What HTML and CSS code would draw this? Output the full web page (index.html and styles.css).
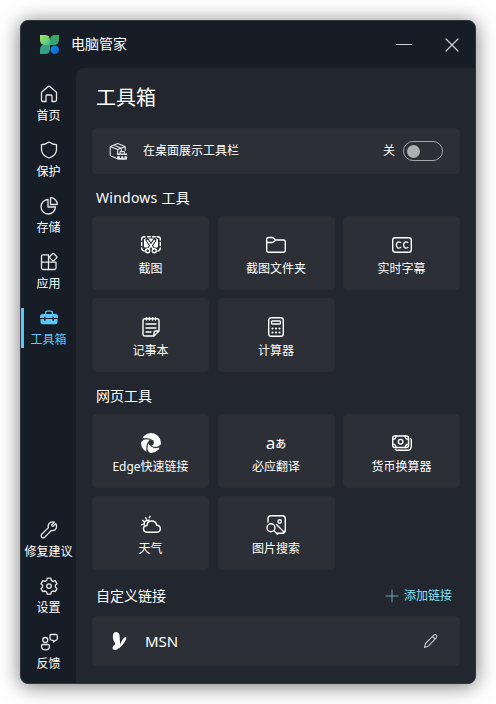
FILE: index.html
```html
<!DOCTYPE html>
<html lang="zh-CN">
<head>
<meta charset="utf-8">
<title>电脑管家</title>
<link rel="stylesheet" href="styles.css">
</head>
<body>
<div class="window">
  <header class="titlebar">
    <svg class="logo" viewBox="0 0 18 18">
      <defs>
        <linearGradient id="g1" x1="0" y1="0" x2="1" y2="1"><stop offset="0" stop-color="#a5e957"/><stop offset="1" stop-color="#43bd8b"/></linearGradient>
        <linearGradient id="g2" x1="1" y1="0" x2="0" y2="1"><stop offset="0" stop-color="#3aa660"/><stop offset="1" stop-color="#319f91"/></linearGradient>
        <linearGradient id="g3" x1="0" y1="0" x2="1" y2="1"><stop offset="0" stop-color="#168bed"/><stop offset="1" stop-color="#0864cf"/></linearGradient>
      </defs>
      <path fill="url(#g2)" d="M9.500 9.500V5Q9.500 0 14.500 0H18V4Q18 9.500 13 9.500zM0 18V14Q0 9 5 9H9.500V13Q9.500 18 5 18z"/>
      <path fill="url(#g1)" d="M0 0H4.500Q9.500 0 9.500 5V9.500H5Q0 9.500 0 5z"/>
      <circle cx="14" cy="14" r="4" fill="url(#g3)"/>
    </svg>
    <span class="app-name">电脑管家</span>
    <div class="controls">
      <svg viewBox="0 0 16 16"><path d="M.5 7.500h15"/></svg>
      <svg viewBox="0 0 16 16"><path d="M2 2l12 12M14 2L2 14"/></svg>
    </div>
  </header>
  <div class="body">
    <nav class="sidebar">
      <a class="nav-item"><svg viewBox="0 0 20 20"><path d="M2.500 8.300 9.200 2.500q.8-.6 1.600 0L17.500 8.300V16q0 1.500-1.500 1.500h-3V12q0-1-1-1H8q-1 0-1 1v5.500H4q-1.500 0-1.500-1.500z"/></svg><span>首页</span></a>
      <a class="nav-item"><svg viewBox="0 0 20 20"><path d="M10 2Q13.500 4.500 17.500 4.700V9.500Q17.500 15.500 10 18 2.500 15.500 2.500 9.500V4.700Q6.500 4.500 10 2z"/></svg><span>保护</span></a>
      <a class="nav-item"><svg viewBox="0 0 20 20"><path d="M9 3.500A7.250 7.250 0 1 0 16.500 11H9z"/><path d="M11.500 1.700A6.800 6.800 0 0 1 18.300 8.500H11.500z"/></svg><span>存储</span></a>
      <a class="nav-item"><svg viewBox="0 0 20 20"><path d="M9.500 2.800H4Q2.500 2.800 2.500 4.300V16Q2.500 17.500 4 17.500H15.500Q17 17.500 17 16V10.200H2.500M9.500 2.800v14.700"/><path d="M13.500 1.800q.7-.7 1.400 0l2.700 2.700q.7.700 0 1.400l-2.700 2.700q-.7.700-1.400 0l-2.700-2.700q-.7-.7 0-1.400z"/></svg><span>应用</span></a>
      <a class="nav-item active"><svg viewBox="0 0 20 20"><path class="solid" d="M6 6V4.500Q6 2.500 8 2.500h4q2 0 2 2V6h2.500Q19 6 19 8.500V10h-4V8.800h-1.500V10h-7V8.800H5V10H1V8.500Q1 6 3.500 6zM7.300 6h5.400V4.600q0-.8-.8-.8H8.100q-.8 0-.8.8zM1.500 11H5v1.700h1.500V11h7v1.700H15V11h3.500v3q0 2.300-2.300 2.300H3.800Q1.500 16.300 1.500 14z"/></svg><span>工具箱</span></a>
      <a class="nav-item push"><svg viewBox="0 0 20 20"><path d="M16.800 3.600 14 6.400l-1-.4-.4-1 2.800-2.800Q11.800 1 9.800 3.800q-1 1.700-.4 3.800L2.700 14.300q-1.300 1.500 0 2.900 1.500 1.400 3 0l6.600-6.700q2.400.7 4-1 2.200-2.400.5-5.900z"/></svg><span>修复建议</span></a>
      <a class="nav-item"><svg viewBox="0 0 20 20"><path d="M8.200 2.200h3.600l.5 2.200 1.700 1 2.200-.7L18 7.800l-1.600 1.500v1.800l1.600 1.500-1.800 3-2.200-.6-1.700 1-.5 2.100H8.200l-.5-2.100-1.700-1-2.200.6-1.800-3 1.600-1.500V9.300L2 7.800l1.800-3.100 2.200.7 1.700-1z"/><circle cx="10" cy="10.100" r="2.300"/></svg><span>设置</span></a>
      <a class="nav-item"><svg viewBox="0 0 20 20"><circle cx="6.300" cy="8" r="2.500"/><path d="M4 12.500h5q1.500 0 1.500 1.500 0 3.900-4 3.900T2.500 14q0-1.500 1.500-1.500zM12 2.500h5q1.300 0 1.300 1.300v3q0 1.500-1.600 1.500L14.500 10V8.300H13Q11 8 11 6.300V3.500q0-1 1-1z"/></svg><span>反馈</span></a>
    </nav>
    <main class="content">
      <h1>工具箱</h1>
      <section class="bar">
        <svg class="box-icon" viewBox="0 0 20 20"><path d="M9.500 17.700 3 15Q2.200 14.600 2.200 13.800V6.300Q2.200 5.500 3 5.200L9 2.800q.7-.3 1.400 0l6 2.400q.8.300.8 1.100V9.500M2.500 5.700 9.700 8.600 17 5.700M9.700 8.600v9M6 4.200l7.300 3v2.500"/><path class="solid" d="M9.300 12.500h2.200v-1.300q0-1.200 1.200-1.200h3q1.200 0 1.200 1.200v1.300h2.200V17.500q0 1.300-1.300 1.300h-7.200q-1.300 0-1.300-1.300z"/><path class="cut" d="M9.500 14.700h9.500M12.600 14v2.500M15.800 14v2.500M13 11.800h2.500"/></svg>
        <span class="bar-label">在桌面展示工具栏</span>
        <span class="state">关</span>
        <span class="toggle"></span>
      </section>
      <h2 class="windows-heading">Windows 工具</h2>
      <section class="grid">
        <div class="card"><svg viewBox="0 0 20 20"><path d="M.7 5V4Q.7 1.700 3 1.700h1M6.500 1.700h2.700M11.500 1.700h2.700M16 1.700h1q2.300 0 2.300 2.300v1M.7 7.500v3M19.300 7.500v3M.7 13q0 2.500 2.500 3M19.300 13q0 2.500-2.500 3"/><path class="solid" d="M3 5q0-1.500 1.500-1.500h11Q17 3.500 17 5v6q0 1-1 1.500h-3L10 9.500 7 12.500H4Q3 12 3 11z"/><path class="cut wide" d="m6.300 5 5.500 8.500M13.700 5 8.200 13.500"/><path d="m6.500 5.500 5.700 8.300M13.500 5.500 7.800 13.800"/><circle cx="6.700" cy="15.800" r="2"/><circle cx="13.300" cy="15.800" r="2"/></svg><span>截图</span></div>
        <div class="card"><svg viewBox="0 0 20 20"><path d="M.7 7.500V4.500q0-2 2-2H6q1 0 1.700.7L9.500 5h7.800q2 0 2 2v8.300q0 2-2 2H2.700q-2 0-2-2zh5Q6.800 7.500 7.700 6.700L9.500 5"/></svg><span>截图文件夹</span></div>
        <div class="card"><svg viewBox="0 0 20 20"><rect x=".7" y="2.700" width="18.600" height="14.600" rx="2.500"/><path d="M8.700 7.500Q5 5.500 4.300 10 5 14.500 8.700 12.500M15.900 7.500Q12.200 5.500 11.500 10 12.200 14.500 15.900 12.500"/></svg><span>实时字幕</span></div>
        <div class="card"><svg viewBox="0 0 20 20"><path d="M4 1.700h12q2 0 2 2V14l-5 5H4q-2 0-2-2V3.700q0-2 2-2zM18 14h-3q-2 0-2 2v3M5.500 0v3M8.500 0v3M11.500 0v3M14.500 0v3M5 7h10M5 11h10M5 15h5"/></svg><span>记事本</span></div>
        <div class="card"><svg viewBox="0 0 20 20"><rect x="2.700" y=".7" width="14.600" height="18.600" rx="2.500"/><rect x="5.500" y="4" width="9" height="3" rx="1"/><path class="dots" d="M6.500 11.500h0M10 11.500h0M13.500 11.500h0M6.500 15.500h0M10 15.500h0M13.500 15.500h0"/></svg><span>计算器</span></div>
      </section>
      <h2 class="web-heading">网页工具</h2>
      <section class="grid">
        <div class="card"><svg viewBox="0 0 20 20"><circle class="solid" cx="10" cy="10" r="10"/><circle class="cut-fill" cx="10.200" cy="9.800" r="2.600"/><path class="cut" d="M0 7.500Q5.500 3.500 12 8M6.500 20Q4.500 12 9 7.500M20 12.500Q13 17 9.500 12"/><path class="cut-fill" d="M-.5 5.500 3.500 5.200.5 9zM5 20.500 6 16.500 9 20.500zM20.500 11 16.500 14.300l3 .7z"/></svg><span>Edge快速链接</span></div>
        <div class="card"><div class="translate"><b>a</b><i>あ</i></div><span>必应翻译</span></div>
        <div class="card"><svg viewBox="0 0 20 20"><rect x=".7" y="3" width="15.800" height="11.500" rx="2"/><circle cx="8.600" cy="8.700" r="2.300"/><path d="M.7 6.300Q4 6.300 4 3M13.200 3q0 3.300 3.300 3.300M.7 11.200q3.300 0 3.300 3.300M13.200 14.500q0-3.300 3.300-3.300M18.500 5.500q.8.700.8 1.800v6q0 4-4 4H5.500q-1.500 0-2.200-1"/></svg><span>货币换算器</span></div>
        <div class="card"><svg viewBox="0 0 20 20"><path d="M6 17.200q-3.500-.2-3.500-3.400 0-3 3.500-3.300 0-4.500 4.800-4.500 4.300 0 4.900 4.300 3.600.2 3.600 3.400 0 3.300-3.600 3.500zM3.200 9.800q-.7-4.500 4.800-4.500M4.500 2.500l.8 1.500M9 1.300l-.6 1.500M1.700 5.500l1.200.8M.4 9.700l1.400-.3"/></svg><span>天气</span></div>
        <div class="card"><svg viewBox="0 0 20 20"><path d="M2 7V3.700q0-3 3-3h11.300q3 0 3 3v11.600q0 3-3 3h-5.500"/><circle cx="13.700" cy="6.500" r="1.700"/><circle cx="5" cy="12.800" r="4"/><path d="m8 15.800 3.500 3.500M10.500 9.500l7.500 7.500"/></svg><span>图片搜索</span></div>
      </section>
      <div class="links-head">
        <h2>自定义链接</h2>
        <a class="add"><svg viewBox="0 0 14 14"><path d="M7 1v12M1 7h12"/></svg>添加链接</a>
      </div>
      <section class="bar link">
        <svg class="msn" viewBox="0 0 20 20"><path class="solid" d="M4 4Q4.500.8 7.500 1q3.500.7 3.200 6L11 11q.8 5-2.500 7.300-2.500 1.400-4.500 0-1.200-1.600.8-3.800 2-1 1.300-2.500Q3.200 8.500 4 4zM10 17.500Q12 9 15.800 6.200q1.700-.7 1.600 1Q16 12 10 17.500z"/></svg>
        <span class="link-name">MSN</span>
        <svg class="edit" viewBox="0 0 16 16"><path d="m1.500 14.500 1-4 8.300-8.300q1.300-1.100 2.500 0 1.200 1.300 0 2.600L5 13.300zM9.500 3.500l2.700 2.700"/></svg>
      </section>
    </main>
  </div>
</div>
</body>
</html>
```
FILE: styles.css
```css
* { box-sizing: border-box; }
body {
  margin: 0;
  padding: 20px;
  height: 704px;
  overflow: hidden;
  background: #fff;
  color: #fff;
  font: 12px/16px "Noto Sans", "Noto Sans CJK SC", sans-serif;
}
svg {
  flex: none;
  fill: none;
  stroke: currentColor;
  stroke-width: 1.4;
  stroke-linecap: round;
  stroke-linejoin: round;
}
.solid { fill: currentColor; stroke: none; }
.cut { stroke: #2c3036; stroke-width: 1.2; }
.wide { stroke-width: 3.6; }
.cut-fill { fill: #2c3036; stroke: none; }
.dots { stroke-width: 2.2; }
.window {
  width: 456px;
  height: 664px;
  overflow: hidden;
  border: 1px solid #30363c;
  border-radius: 8px;
  background: #171d26;
  box-shadow: 0 2px 20px rgba(0, 0, 0, .55);
}
.titlebar {
  display: flex;
  align-items: center;
  height: 47px;
  padding: 0 15px 0 19px;
}
.logo { width: 19px; height: 19px; stroke: none; }
.app-name { margin: 0 0 2px 12px; font-size: 14px; line-height: 20px; }
.controls { display: flex; gap: 32px; margin-left: auto; }
.controls svg { width: 16px; height: 16px; color: #d0d2d4; stroke-width: 1.2; }
.body { display: flex; height: 615px; }
.sidebar {
  display: flex;
  flex-direction: column;
  width: 55px;
  padding: 8px 0 3px;
}
.nav-item {
  display: flex;
  flex-direction: column;
  align-items: center;
  height: 56px;
  padding-top: 8px;
  white-space: nowrap;
}
.nav-item svg { width: 20px; height: 20px; margin-bottom: 4px; stroke-width: 1.3; color: #e5e7e9; }
.nav-item.active {
  color: #5ac7fc;
  background: linear-gradient(#5ac7fc, #5ac7fc) 0 8px / 3px 40px no-repeat;
}
.nav-item.active svg { color: #5ac7fc; }
.push { margin-top: auto; }
.content {
  flex: 1;
  min-width: 0;
  padding: 15px 15px 0 16px;
  border-top-left-radius: 8px;
  background: #22262e;
}
h1, h2 { margin: 0 0 0 4px; font-weight: 400; }
h1 { font-size: 20px; line-height: 30px; }
h2 { font-size: 14px; line-height: 20px; }
.bar {
  display: flex;
  align-items: center;
  height: 46px;
  margin: 15px 0 14px;
  padding: 0 16px 0 15px;
  border: 1px solid #292d34;
  border-radius: 4px;
  background: #2c3036;
}
.box-icon { width: 20px; height: 20px; stroke-width: 1.1; color: #e5e7e9; }
.bar-label { margin-left: 15px; }
.state { margin-left: auto; }
.toggle {
  width: 40px;
  height: 20px;
  margin-left: 8px;
  padding: 3px;
  border: 1px solid #a3a5a8;
  border-radius: 10px;
}
.toggle::before {
  content: "";
  display: block;
  width: 13px;
  height: 13px;
  border-radius: 50%;
  background: #aeafb1;
}
.windows-heading { letter-spacing: .25px; }
.grid {
  display: grid;
  grid-template-columns: 117px 117px 117px;
  grid-auto-rows: 74px;
  justify-content: space-between;
  row-gap: 8px;
  margin-top: 8px;
}
.card {
  display: flex;
  flex-direction: column;
  align-items: center;
  padding-top: 18px;
  border: 1px solid #292d34;
  border-radius: 4px;
  background: #2c3036;
}
.card svg { width: 20px; height: 20px; margin-bottom: 6px; }
.translate { display: flex; align-items: center; justify-content: center; height: 20px; margin-bottom: 6px; }
.translate b { font: 400 17px/20px "Noto Sans", sans-serif; }
.translate i { font: 500 11px/20px "Noto Sans CJK JP", sans-serif; }
.web-heading { margin-top: 14px; }
.links-head { display: flex; align-items: center; margin-top: 16px; }
.add { display: flex; align-items: center; gap: 5px; margin: 0 8px 0 auto; color: #8ce1f2; }
.add svg { width: 14px; height: 14px; stroke-width: 1; color: #68a9b8; }
.link { height: 50px; margin: 10px 0 0; padding: 0 20px 0 16px; }
.msn { width: 20px; height: 20px; }
.link-name { margin-left: 16px; font-size: 15px; line-height: 20px; }
.edit { width: 16px; height: 16px; margin-left: auto; stroke-width: 1.1; color: #c4c6c8; }
```
